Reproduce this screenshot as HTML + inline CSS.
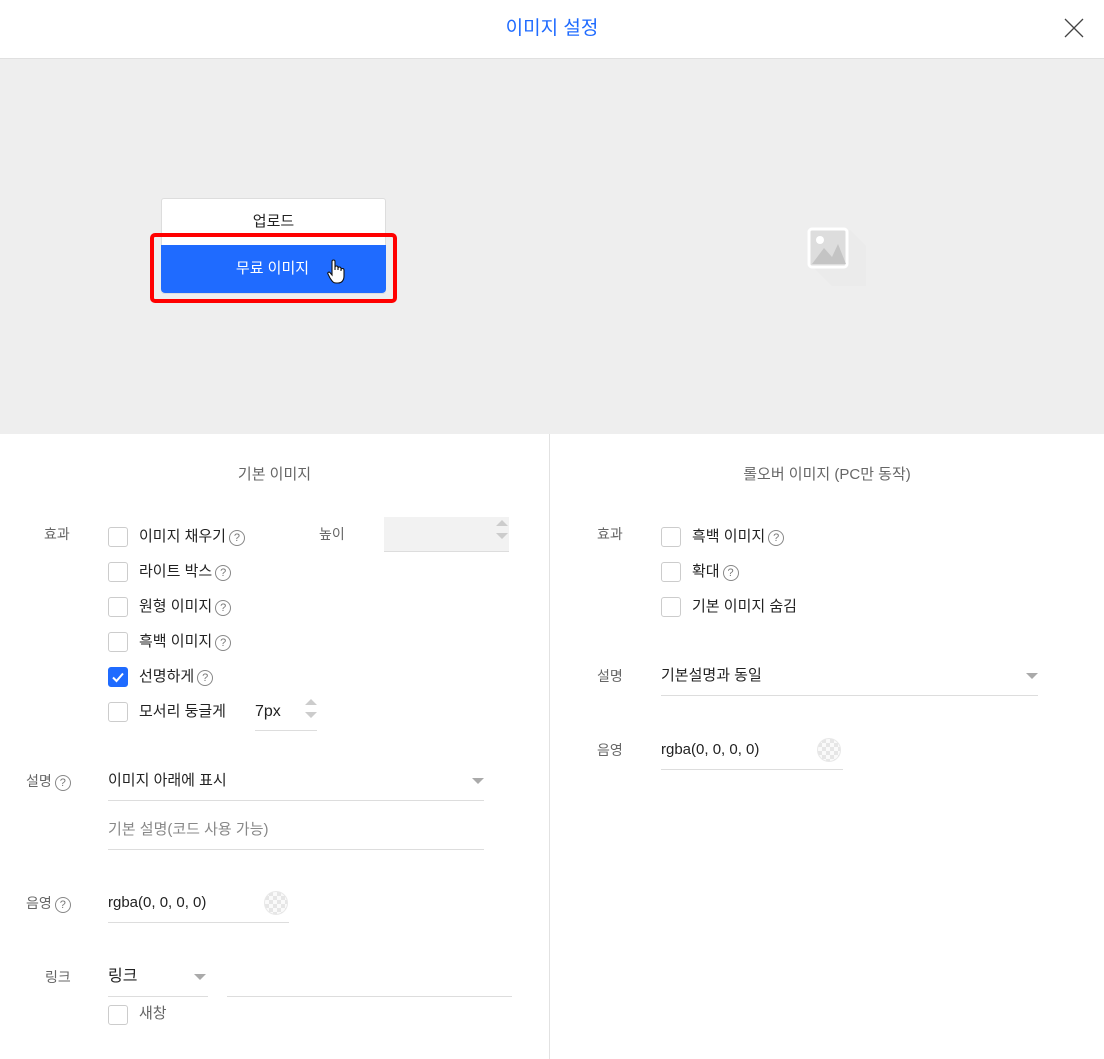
<!DOCTYPE html>
<html><head><meta charset="utf-8">
<style>
*{margin:0;padding:0;box-sizing:border-box}
body{width:1104px;height:1059px;position:relative;background:#fff;font-family:"Liberation Sans","Noto Sans CJK KR",sans-serif;color:#222;overflow:hidden;font-size:15px}
.a{position:absolute;white-space:nowrap;line-height:24px}
.lbl{color:#666;font-size:14px}
.cb{position:absolute;width:20px;height:20px;border:1px solid #ccc;border-radius:3px;background:#fff}
.cb.on{background:#1f6bff;border-color:#1f6bff}
.q{display:inline-block;width:16px;height:16px;border:1px solid #888;border-radius:50%;font-size:11px;line-height:14px;text-align:center;color:#777;vertical-align:0px;margin-left:3px}
.ln{position:absolute;height:1px;background:#ddd}
.car{position:absolute;width:0;height:0;border-left:6px solid transparent;border-right:6px solid transparent;border-top:6px solid #aaa}
.chk{position:absolute;width:24px;height:24px;border-radius:50%;background:repeating-conic-gradient(#e6e6e6 0 25%,#fafafa 0 50%) 0 0/8px 8px;border:1px solid #e8e8e8}
</style></head><body>
<div class="a" style="left:0;width:1104px;top:18px;text-align:center;color:#1f6bff;font-size:19px;line-height:22px">이미지 설정</div>
<svg class="a" style="left:1064px;top:18px" width="20" height="20"><path d="M1 1L19 19M19 1L1 19" stroke="#444" stroke-width="1.3"/></svg>
<div class="a" style="left:0;top:58px;width:1104px;height:376px;background:#eee;border-top:1px solid #e0e0e0"></div>
<div class="a" style="left:161px;top:198px;width:225px;height:96px;background:#fff;border:1px solid #ddd;border-radius:3px"></div>
<div class="a" style="left:161px;top:210px;width:225px;text-align:center;font-size:15px">업로드</div>
<div class="a" style="left:161px;top:245px;width:225px;height:48px;background:#1f6bff;border-radius:0 0 4px 4px"></div>
<div class="a" style="left:161px;top:257px;width:225px;text-align:center;color:#fff;font-size:15px;padding-right:2px">무료 이미지</div>
<svg class="a" style="left:327px;top:259px" width="18" height="25" viewBox="0 0 18 25"><path d="M5 2.5a1.5 1.5 0 0 1 3 0V11V8.5a1.5 1.5 0 0 1 3 0V11V9.5a1.5 1.5 0 0 1 3 0V12V11a1.5 1.5 0 0 1 3 0v6c0 4-2 7-6 7H9c-3 0-4-2-6-5L1 15c-.8-1.2.8-2.6 2-1.4L5 16Z" fill="#fff" stroke="#111" stroke-width="1.1"/></svg>
<div class="a" style="left:150px;top:233px;width:247px;height:70px;border:4px solid #f00;border-radius:5px"></div>
<svg class="a" style="left:806px;top:226px" width="60" height="60"><path d="M4 38 L44 4 L60 20 L60 60 L26 60Z" fill="#e8e8e8" opacity=".5"/><rect x="3" y="3" width="38" height="38" rx="3" fill="#ddd" stroke="#fff" stroke-width="3"/><circle cx="14" cy="14" r="4" fill="#fff"/><path d="M6 38L18 22L26 31L32 18L40 38Z" fill="#c4c4c4"/></svg>
<div class="a" style="left:549px;top:434px;width:1px;height:625px;background:#e2e2e2"></div>
<div class="a" style="left:0;width:549px;top:463px;text-align:center;color:#666;font-size:15px">기본 이미지</div>
<div class="a" style="left:550px;width:554px;top:463px;text-align:center;color:#666;font-size:15px">롤오버 이미지 (PC만 동작)</div>
<div class="a lbl" style="left:44px;top:522px">효과</div>
<div class="cb" style="left:108px;top:527px"></div><div class="a" style="left:139px;top:525px">이미지 채우기<span class="q">?</span></div>
<div class="cb" style="left:108px;top:562px"></div><div class="a" style="left:139px;top:560px">라이트 박스<span class="q">?</span></div>
<div class="cb" style="left:108px;top:597px"></div><div class="a" style="left:139px;top:595px">원형 이미지<span class="q">?</span></div>
<div class="cb" style="left:108px;top:632px"></div><div class="a" style="left:139px;top:630px">흑백 이미지<span class="q">?</span></div>
<div class="cb on" style="left:108px;top:667px"><svg width="18" height="18" style="position:absolute;left:0;top:0"><path d="M4 9.5L7.5 13L14 5.5" stroke="#fff" stroke-width="2" fill="none"/></svg></div><div class="a" style="left:139px;top:665px">선명하게<span class="q">?</span></div>
<div class="cb" style="left:108px;top:702px"></div><div class="a" style="left:139px;top:700px">모서리 둥글게</div>
<div class="a" style="left:255px;top:700px;font-size:16px">7px</div>
<svg class="a" style="left:304px;top:698px" width="14" height="22"><path d="M1 7L7 1L13 7Z M1 14L7 20L13 14Z" fill="#ccc"/></svg>
<div class="ln" style="left:255px;top:730px;width:62px"></div>
<div class="a lbl" style="left:319px;top:522px">높이</div>
<div class="a" style="left:384px;top:517px;width:125px;height:35px;background:#f2f2f2;border-bottom:1px solid #ddd"></div>
<svg class="a" style="left:495px;top:519px" width="14" height="22"><path d="M1 7L7 1L13 7Z M1 14L7 20L13 14Z" fill="#ccc"/></svg>
<div class="a lbl" style="left:26px;top:769px">설명<span class="q">?</span></div>
<div class="a" style="left:108px;top:769px">이미지 아래에 표시</div>
<div class="car" style="left:472px;top:778px"></div>
<div class="ln" style="left:108px;top:800px;width:376px"></div>
<div class="a" style="left:108px;top:818px;color:#888">기본 설명(코드 사용 가능)</div>
<div class="ln" style="left:108px;top:849px;width:376px"></div>
<div class="a lbl" style="left:26px;top:891px">음영<span class="q">?</span></div>
<div class="a" style="left:108px;top:891px">rgba(0, 0, 0, 0)</div>
<div class="chk" style="left:264px;top:891px"></div>
<div class="ln" style="left:108px;top:922px;width:181px"></div>
<div class="a lbl" style="left:45px;top:965px">링크</div>
<div class="a" style="left:108px;top:965px;font-size:16px">링크</div>
<div class="car" style="left:194px;top:974px"></div>
<div class="ln" style="left:108px;top:996px;width:100px"></div>
<div class="ln" style="left:227px;top:996px;width:285px"></div>
<div class="cb" style="left:108px;top:1005px"></div><div class="a" style="left:139px;top:1002px;color:#666">새창</div>
<div class="a lbl" style="left:597px;top:522px">효과</div>
<div class="cb" style="left:661px;top:527px"></div><div class="a" style="left:692px;top:525px">흑백 이미지<span class="q">?</span></div>
<div class="cb" style="left:661px;top:562px"></div><div class="a" style="left:692px;top:560px">확대<span class="q">?</span></div>
<div class="cb" style="left:661px;top:597px"></div><div class="a" style="left:692px;top:595px">기본 이미지 숨김</div>
<div class="a lbl" style="left:597px;top:664px">설명</div>
<div class="a" style="left:661px;top:664px">기본설명과 동일</div>
<div class="car" style="left:1026px;top:673px"></div>
<div class="ln" style="left:661px;top:695px;width:377px"></div>
<div class="a lbl" style="left:597px;top:738px">음영</div>
<div class="a" style="left:661px;top:738px">rgba(0, 0, 0, 0)</div>
<div class="chk" style="left:817px;top:738px"></div>
<div class="ln" style="left:661px;top:769px;width:182px"></div>
</body></html>
